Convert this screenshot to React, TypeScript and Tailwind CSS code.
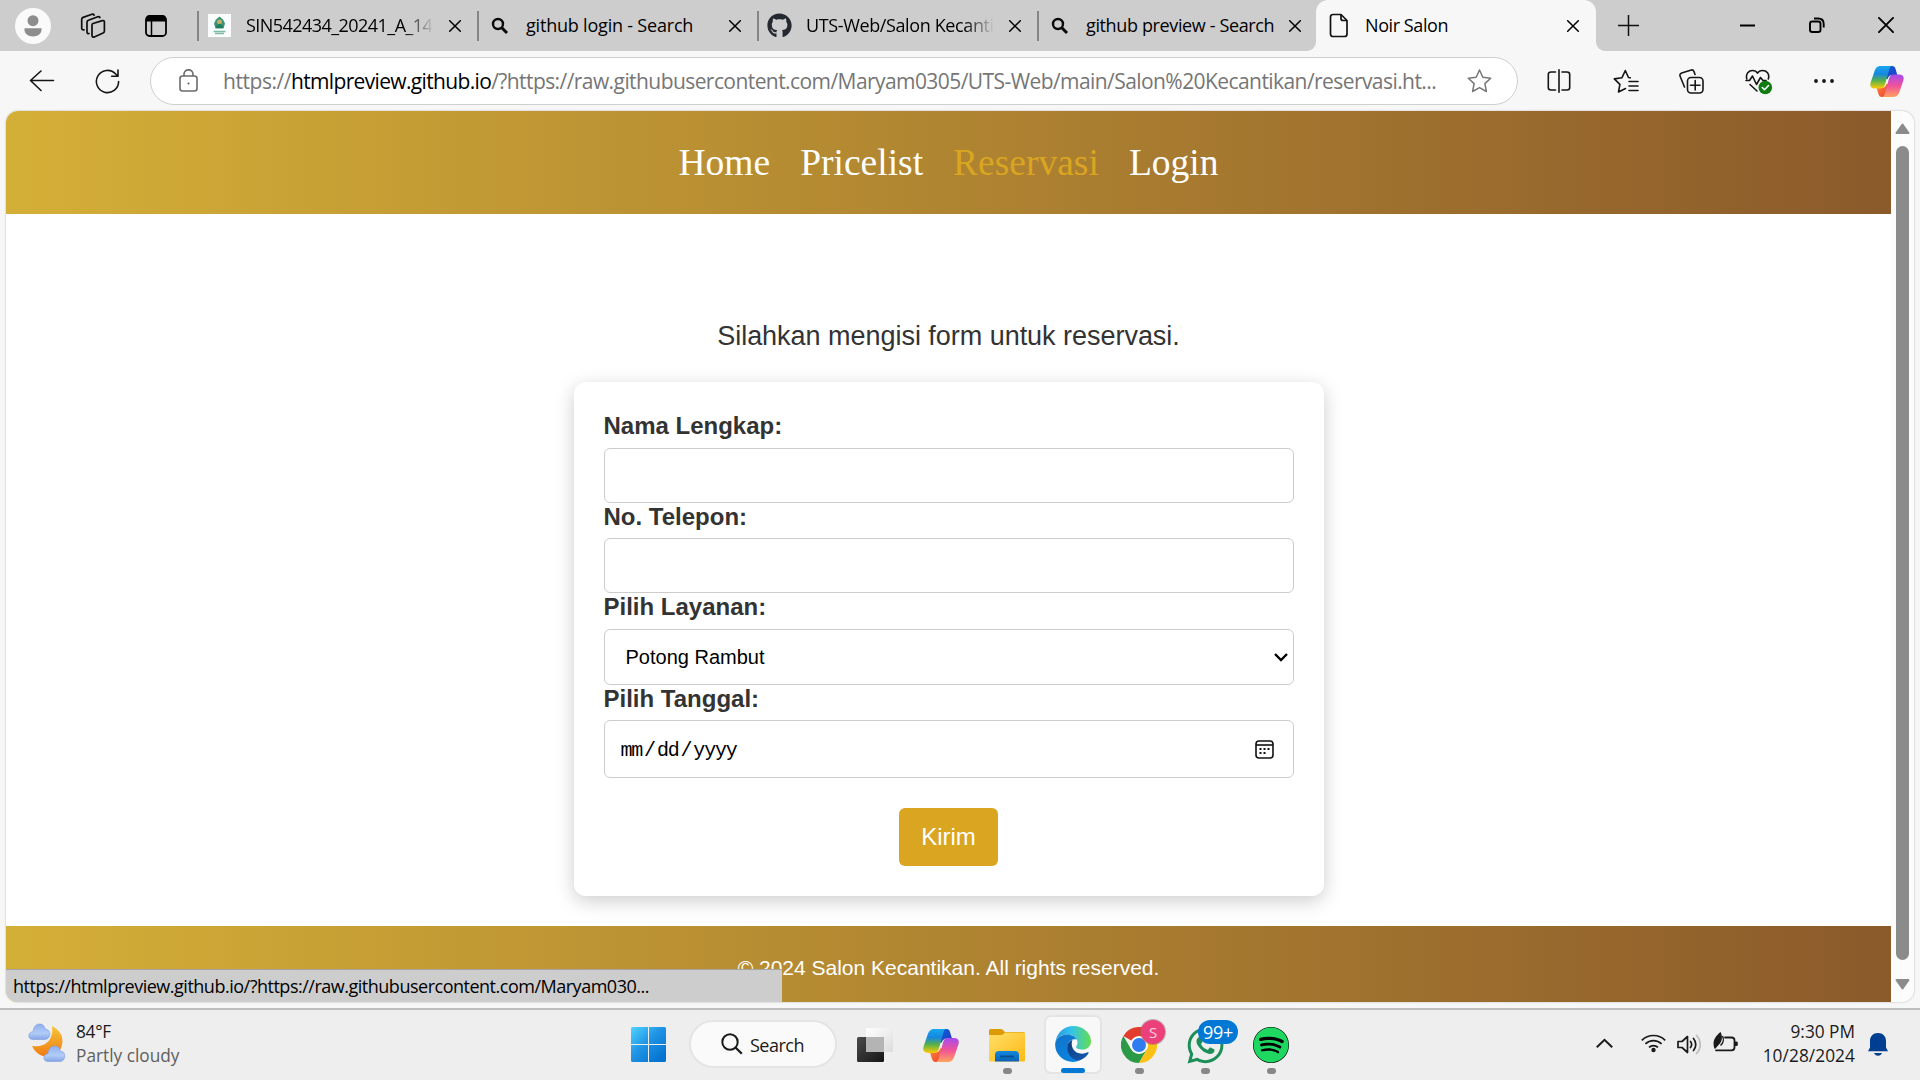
import React from "react";
import type { ReactNode } from "react";
import { FaGithub, FaSpotify, FaWhatsapp } from "react-icons/fa";

const UI = "font-['Open_Sans','Noto_Sans',sans-serif]";

function CloseX({ size = 12, width = 1.5 }: { size?: number; width?: number }) {
  return (
    <svg width={size} height={size} viewBox="0 0 12 12" fill="none" stroke="#000" strokeWidth={width} strokeLinecap="round">
      <path d="M.7.7 11.3 11.3M11.3.7.7 11.3" />
    </svg>
  );
}

function BoldSearch() {
  return (
    <svg width="18" height="18" viewBox="0 0 18 18" fill="none" stroke="#0a0a0a">
      <circle cx="7" cy="7" r="5" strokeWidth="2.4" />
      <path d="M10.8 10.8 16 16" strokeWidth="3" />
    </svg>
  );
}

function Copilot({ width, height, id }: { width: number; height: number; id: string }) {
  return (
    <svg width={width} height={height} viewBox="0 0 36 33">
      <defs>
        <linearGradient id={id + "a"} x1="0" y1="0" x2="0" y2="1">
          <stop offset="0" stopColor="#18a7ee" />
          <stop offset=".35" stopColor="#1687e0" />
          <stop offset=".65" stopColor="#58b148" />
          <stop offset="1" stopColor="#ffcb05" />
        </linearGradient>
        <linearGradient id={id + "b"} x1="0" y1="0" x2="0" y2="1">
          <stop offset="0" stopColor="#a54bef" />
          <stop offset=".5" stopColor="#f0529a" />
          <stop offset="1" stopColor="#ffa35e" />
        </linearGradient>
        <linearGradient id={id + "c"} x1="0" y1="0" x2="1" y2="1">
          <stop offset="0" stopColor="#0f5fd8" />
          <stop offset="1" stopColor="#1f3fc4" />
        </linearGradient>
        <linearGradient id={id + "d"} x1="0" y1="0" x2="1" y2="1">
          <stop offset="0" stopColor="#ff8a3c" />
          <stop offset="1" stopColor="#e8392f" />
        </linearGradient>
      </defs>
      <path d="M20 0h3.500c2 0 3 1.200 3.600 3.200L29 9.500h-5c-3 0-4.600 1.500-5.500 4.500L14 12Z" fill={`url(#${id}c)`} />
      <path d="M16 33h-3.500c-2 0-3-1.200-3.600-3.200L7 23.500h5c3 0 4.600-1.500 5.500-4.500L22 21Z" fill={`url(#${id}d)`} />
      <path d="M23 0H11C7.500 0 5.600 2.600 4.500 6L.6 17.500C-.7 21.600 1.200 24 5 24h6c2.600 0 4-1.500 4.800-4L20.300 4c.6-2.300 1.200-3.700 2.700-4Z" fill={`url(#${id}a)`} />
      <path d="M13 33h12c3.500 0 5.400-2.600 6.500-6l3.900-11.500C36.700 11.400 34.800 9 31 9h-6c-2.600 0-4 1.500-4.800 4l-4.500 16c-.6 2.300-1.200 3.700-2.700 4Z" fill={`url(#${id}b)`} />
    </svg>
  );
}

function Tab({ icon, title, ls, fade }: { icon: ReactNode; title: string; ls: string; fade?: boolean }) {
  return (
    <div className="flex h-[51px] items-center">
      <div className="h-[30px] w-[2px] bg-[#858585]" />
      <div className="flex w-[41px] justify-center">{icon}</div>
      <div className={"w-[196px] pl-[6px] text-[18px] whitespace-nowrap text-black " + ls + (fade ? " [mask-image:linear-gradient(to_right,#000_84%,transparent_99%)]" : "")}>
        {title}
      </div>
      <div className="flex w-[41px] justify-center pr-[4px]">
        <CloseX />
      </div>
    </div>
  );
}

function TabStrip() {
  return (
    <div className="flex h-[51px] shrink-0 bg-[#cdcdcd]">
      <div className="flex h-[51px] w-[197px] items-center">
        <div className="ml-[15px] flex h-9 w-9 items-center justify-center rounded-full bg-[#fafafa]">
          <svg width="18" height="22" viewBox="0 0 18 22" fill="#8d8d8d">
            <circle cx="9" cy="5.700" r="5.500" />
            <path d="M.5 13.200h17c.6 5-3 8.300-8.500 8.300S-.1 18.200.5 13.200Z" />
          </svg>
        </div>
        <svg className="ml-[29px]" width="26" height="26" viewBox="0 0 26 26" fill="none" stroke="#0d0d0d" strokeWidth="1.700" strokeLinejoin="round" strokeLinecap="round">
          <path d="M13 10.500 22.400 7.600c1.100-.3 2 .3 2 1.400v9c0 1-.4 1.600-1.300 2l-8.800 4c-1.200.5-2.300-.2-2.300-1.400V12c0-.8.300-1.300 1-1.500Z" />
          <path d="M9 20.500c-1.300.2-2-.4-2-1.600V9.200c0-1 .5-1.600 1.400-2l9.400-3.500c.9-.3 1.700 0 2.100.8" />
          <path d="M4 16.800c-1.300.2-2.300-.4-2.300-1.600V6.400c0-1 .5-1.600 1.400-2L12 1.300c.9-.3 1.700 0 2.100.8" />
        </svg>
        <svg className="ml-[39px]" width="22" height="22" viewBox="0 0 22 22">
          <rect x="1" y="1" width="20" height="20" rx="3.500" fill="none" stroke="#000" strokeWidth="1.800" />
          <path d="M1 6.500V4.500C1 2.500 2.500 1 4.500 1h13C19.500 1 21 2.500 21 4.500v2Z" fill="#000" />
          <path d="M6.500 6v15" stroke="#000" strokeWidth="1.500" />
        </svg>
      </div>
      <Tab
        title="SIN542434_20241_A_14"
        ls="tracking-[-0.55px]"
        fade
        icon={
          <svg width="23" height="23" viewBox="0 0 23 23">
            <rect width="23" height="23" fill="#fbfdfc" />
            <path d="M11.500 2.500 15 5.500l2 4-1.500 5h-8L6 9.500l2-4Z" fill="#3a9373" />
            <circle cx="11.500" cy="8" r="2.400" fill="#c9b06a" />
            <path d="M8 12.500 11.500 9.500 15 12.500v1.500H8Z" fill="#1e7d5c" />
            <path d="M5.500 17.500h12M7 19.500h9" stroke="#7dbba4" strokeWidth="1.400" />
          </svg>
        }
      />
      <Tab title="github login - Search" ls="tracking-[-0.2px]" icon={<BoldSearch />} />
      <Tab title="UTS-Web/Salon Kecanti" ls="tracking-[-0.38px]" fade icon={<FaGithub size={25} color="#24292f" />} />
      <Tab title="github preview - Search" ls="tracking-[-0.37px]" icon={<BoldSearch />} />
      <div className="-ml-[10px] flex h-[51px] w-[298px]">
        <div className="h-[51px] w-[9px] bg-[#f7f7f7]">
          <div className="h-full w-full rounded-br-[9px] bg-[#cdcdcd]" />
        </div>
        <div className="bg-[#cdcdcd]">
          <div className="flex h-[51px] w-[280px] items-center rounded-t-[12px] bg-[#f7f7f7]">
            <svg className="ml-[13px]" width="20" height="25" viewBox="0 0 20 25" fill="none" stroke="#111" strokeWidth="1.700" strokeLinejoin="round">
              <path d="M4 1.500h8l6 6V21c0 1.500-1 2.500-2.500 2.500H4C2.500 23.500 1.500 22.500 1.500 21V4C1.500 2.500 2.500 1.500 4 1.500Z" />
              <path d="M12 1.500V5.500c0 1.300.7 2 2 2h4" />
            </svg>
            <div className="ml-[16px] w-[202px] text-[18px] tracking-[-0.42px]">Noir Salon</div>
            <CloseX />
          </div>
        </div>
        <div className="h-[51px] w-[9px] bg-[#f7f7f7]">
          <div className="h-full w-full rounded-bl-[9px] bg-[#cdcdcd]" />
        </div>
      </div>
      <div className="flex h-[50px] flex-1 items-center">
        <svg className="ml-[13px]" width="21" height="21" viewBox="0 0 21 21" stroke="#111" strokeWidth="1.500">
          <path d="M10.500 0v21M0 10.500h21" />
        </svg>
        <svg className="ml-[101px]" width="15" height="15" viewBox="0 0 15 15" stroke="#000" strokeWidth="2">
          <path d="M0 7.500h15" />
        </svg>
        <svg className="ml-[54px]" width="16" height="16" viewBox="0 0 16 16" fill="none" stroke="#000" strokeWidth="1.900">
          <rect x="1" y="4.500" width="10.500" height="10.500" rx="2.300" />
          <path d="M5 1.500h4c3.500 0 5.700 2 5.700 5.500v3.500" />
        </svg>
        <div className="ml-[53px]">
          <CloseX size={16} width={1.4} />
        </div>
      </div>
    </div>
  );
}

function AddressBar() {
  const line = { fill: "none", stroke: "#161616", strokeWidth: 1.6, strokeLinecap: "round" as const, strokeLinejoin: "round" as const };
  return (
    <div className="flex h-[60px] shrink-0 items-center bg-[#f7f7f7]">
      <svg className="ml-[29px]" width="26" height="22" viewBox="0 0 26 22" {...line}>
        <path d="M24.500 10.500H1.500M12 1 1.500 10.500 12 20.500" />
      </svg>
      <svg className="ml-[40px]" width="25" height="25" viewBox="0 0 25 25" {...line}>
        <path d="M23.600 12.500A11.100 11.100 0 1 1 20.700 5L23 7.200M23 1v6.300h-6.300" />
      </svg>
      <div className="ml-[30px] flex h-[48px] w-[1368px] items-center rounded-full border border-[#cfcfcf] bg-white">
        <svg className="-mt-[2px] ml-[28px]" width="19" height="23" viewBox="0 0 19 23" fill="none" stroke="#6b6b6b" strokeWidth="1.600">
          <rect x="1" y="7" width="17" height="15" rx="2.500" />
          <path d="M5 7V5.200C5 2.700 6.900.9 9.500.9S14 2.700 14 5.200V7" />
          <circle cx="9.500" cy="14.500" r="1" fill="#555" stroke="none" />
        </svg>
        <div className="mt-[2px] ml-[25px] flex w-[1238px] text-[21px] whitespace-nowrap text-[#767676]">
          <span className="tracking-[-0.45px]">https://</span>
          <span className="tracking-[-0.66px] text-black">htmlpreview.github.io</span>
          <span className="tracking-[-0.572px]">/?https://raw.githubusercontent.com/Maryam0305/UTS-Web/main/Salon%20Kecantikan/reservasi.ht...</span>
        </div>
        <svg className="ml-[6px]" width="25" height="24" viewBox="0 0 25 24" fill="none" stroke="#777" strokeWidth="1.500" strokeLinejoin="round">
          <path d="m12.500 1 3.300 7.200 7.900 1-5.800 5.400 1.500 7.900-6.900-3.900-6.900 3.900 1.500-7.900L1.300 9.200l7.900-1Z" />
        </svg>
      </div>
      <svg className="ml-[29px]" width="24" height="24" viewBox="0 0 24 24" {...line}>
        <path d="M8.500 3H4C2.300 3 1.300 4 1.300 5.500v13C1.300 20 2.300 21 4 21h4.500M15 3h5c1.700 0 2.700 1 2.700 2.500v13c0 1.500-1 2.500-2.700 2.500h-5M12 .8v22.400" />
      </svg>
      <svg className="ml-[42px]" width="26" height="25" viewBox="0 0 26 25" {...line}>
        <path d="m5.500 23 1.400-7.600L1.300 9.900 8.900 8.800 12.300 1.500 15.500 8.500M5.500 23l7-3.500M16 12.500h9M16 17h9M16 21.500h9M15.500 8.500l1.800.3" />
      </svg>
      <svg className="ml-[40px]" width="25" height="25" viewBox="0 0 25 25" {...line}>
        <rect x="8.500" y="8.500" width="15.500" height="15.500" rx="3.500" />
        <path d="M16.200 11.500v9.500M11.500 16.200h9.500M5.500 18 1.200 7.500c-.7-1.700 0-3 1.500-3.600L11.500 1.200c1.500-.6 3 .1 3.600 1.600l.9 2.700" />
      </svg>
      <svg className="mt-[2px] ml-[41px]" width="28" height="27" viewBox="0 0 28 27" {...line}>
        <path d="M1.800 10C.3 4.500 4 1.500 7.500 1.500c2.300 0 4 1 5 2.700 1-1.700 2.700-2.700 5-2.700C21.500 1.500 25 4.500 23.300 10" />
        <path d="M1 11.500h3.500L7.500 7l4 8.500 4-7 2.500 3h3M5 15.500l7 6.500" />
        <circle cx="20.300" cy="18.500" r="6.800" fill="#0f7b10" stroke="none" />
        <path d="m17.300 18.500 2.200 2.200 4-4.200" stroke="#fff" />
      </svg>
      <svg className="ml-[41px]" width="20" height="4" viewBox="0 0 20 4" fill="#161616">
        <circle cx="2" cy="2" r="1.900" />
        <circle cx="10" cy="2" r="1.900" />
        <circle cx="18" cy="2" r="1.900" />
      </svg>
      <div className="ml-[36px]">
        <Copilot width={34} height={31} id="top" />
      </div>
    </div>
  );
}

function Field({ label, className, children }: { label: string; className: string; children?: ReactNode }) {
  return (
    <>
      <label className="block h-[28px] text-[24px] leading-[28px] font-bold text-[#333]">{label}</label>
      <div className={"flex items-center rounded-[6px] border border-[#ccc] bg-white text-[20px] text-black " + className}>{children}</div>
    </>
  );
}

function SalonPage() {
  return (
    <div className="relative ml-[6px] flex h-[891px] w-[1908px] shrink-0 overflow-hidden rounded-[12px] bg-[#fcfcfc] shadow-[0_0_2px_rgba(0,0,0,0.3)]">
      <div className="flex w-[1885px] flex-col bg-white font-['Liberation_Sans',Arial,sans-serif]">
        <nav className="flex h-[103px] shrink-0 items-center justify-center gap-[30px] bg-[linear-gradient(to_right,#d4af37,#8b5a2b)] pt-[2px] font-['Liberation_Serif',serif] text-[37.5px] text-white">
          <a>Home</a>
          <a>Pricelist</a>
          <a className="text-[#daa520]">Reservasi</a>
          <a>Login</a>
        </nav>
        <p className="mt-[106px] h-[32px] text-center text-[27px] leading-[32px] tracking-[-0.03px] text-[#333]">
          Silahkan mengisi form untuk reservasi.
        </p>
        <form className="mx-auto mt-[30px] flex h-[514px] w-[750px] shrink-0 flex-col rounded-[12px] bg-white px-[30px] pt-[30px] shadow-[0_5px_19px_rgba(0,0,0,0.2)]">
          <Field label="Nama Lengkap:" className="mt-[8px] h-[55px]" />
          <Field label="No. Telepon:" className="mt-[7px] h-[55px]" />
          <Field label="Pilih Layanan:" className="mt-[8px] h-[56px] justify-between pr-[5px] pl-[21px]">
            <span>Potong Rambut</span>
            <svg width="14" height="9" viewBox="0 0 14 9" fill="none" stroke="#000" strokeWidth="2.400">
              <path d="m1 1 6 6 6-6" />
            </svg>
          </Field>
          <Field label="Pilih Tanggal:" className="mt-[7px] h-[58px] justify-between pr-[19px] pl-[16px]">
            <span className="flex gap-[2px] pt-[3px] font-['Liberation_Mono',monospace] text-[20px] tracking-[-1.200px]">
              <span>mm</span>
              <span>/</span>
              <span>dd</span>
              <span>/</span>
              <span>yyyy</span>
            </span>
            <svg width="19" height="19" viewBox="0 0 19 19" fill="none" stroke="#111" strokeWidth="1.600">
              <rect x="1" y="1" width="17" height="17" rx="3" />
              <path d="M1 5h17" />
              <path d="M4.500 9h2M8.500 9h2M12.500 9h2M4.500 13h2M8.500 13h2" strokeWidth="2" />
            </svg>
          </Field>
          <button type="button" className="mx-auto mt-[30px] h-[58px] w-[99px] rounded-[6px] bg-[#daa520] text-[24px] text-white">
            Kirim
          </button>
        </form>
        <footer className="mt-[30px] flex h-[76px] shrink-0 items-center justify-center bg-[linear-gradient(to_right,#d4af37,#8b5a2b)] pt-[7px] text-[21px] text-white">
          © 2024 Salon Kecantikan. All rights reserved.
        </footer>
      </div>
      <div className="flex w-[23px] flex-col items-center">
        <svg className="mt-[12px] shrink-0" width="15" height="12" viewBox="0 0 15 12">
          <path d="M7.500 1.500 13.500 10h-12Z" fill="#8b8b8b" stroke="#8b8b8b" strokeWidth="2" strokeLinejoin="round" />
        </svg>
        <div className="mt-[11px] h-[814px] w-[13px] rounded-full bg-[#8b8b8b]" />
        <svg className="mt-[18px] shrink-0" width="15" height="12" viewBox="0 0 15 12">
          <path d="M7.500 10.500 13.500 2h-12Z" fill="#8b8b8b" stroke="#8b8b8b" strokeWidth="2" strokeLinejoin="round" />
        </svg>
      </div>
      <div className="absolute bottom-0 left-0 flex h-[33px] w-[776px] items-center border-t border-black/20 bg-[#cdcdcd] pl-[7px] font-['Open_Sans','Noto_Sans',sans-serif] text-[18px] tracking-[-0.49px] whitespace-nowrap text-black">
        https://htmlpreview.github.io/?https://raw.githubusercontent.com/Maryam030...
      </div>
    </div>
  );
}

function TaskItem({ children, dot }: { children: ReactNode; dot?: boolean }) {
  return (
    <div className="flex h-[68px] w-[66px] flex-col items-center">
      <div className="mt-[17px] flex h-9 items-center">{children}</div>
      {dot && <div className="mt-[5px] h-[6px] w-[9px] rounded-full bg-[#878787]" />}
    </div>
  );
}

function Taskbar() {
  return (
    <div className="mt-auto flex h-[72px] shrink-0 border-t-2 border-[#bdbdbd] bg-[#eee]">
      <div className="flex w-[631px]">
        <svg className="mt-[13px] ml-[28px]" width="38" height="42" viewBox="0 0 38 42">
          <defs>
            <linearGradient id="moon" x1="0" y1="0" x2="0" y2="1">
              <stop offset="0" stopColor="#f6c53a" />
              <stop offset="1" stopColor="#ef7b12" />
            </linearGradient>
            <linearGradient id="cloud" x1="0" y1="0" x2="0" y2="1">
              <stop offset="0" stopColor="#8fb0ee" />
              <stop offset=".6" stopColor="#b0ccf7" />
              <stop offset="1" stopColor="#86a4e6" />
            </linearGradient>
          </defs>
          <path d="M24 3c8 4 12 11 10 19-2 9-11 14-19 11-6-2-9-6-11-10 12 2 22-5 20-20Z" fill="url(#moon)" />
          <path id="wcloud" d="M5 16.500C2.500 16.500.8 15 .8 12.800S2.500 8.800 5 8.700C5.500 4 8 1 11.500 1s5 2 5.700 5c2.900.2 4.600 2.300 4.600 5s-1.800 5.500-5 5.500Z" fill="url(#cloud)" stroke="#7d9be0" strokeWidth=".6" />
          <use href="#wcloud" x="15" y="22" />
        </svg>
        <div className="mt-[10px] ml-[10px] text-[17.25px] leading-[24px]">
          <div className="tracking-[-0.3px] text-[#1a1a1a]">84°F</div>
          <div className="text-[#5f5f5f]">Partly cloudy</div>
        </div>
      </div>
      <svg className="mt-[17px]" width="35" height="35" viewBox="0 0 35 35">
        <defs>
          <linearGradient id="win" gradientUnits="userSpaceOnUse" x1="0" y1="0" x2="30" y2="32">
            <stop offset="0" stopColor="#4fd3ff" />
            <stop offset=".5" stopColor="#2094e4" />
            <stop offset="1" stopColor="#0573d1" />
          </linearGradient>
        </defs>
        <path d="M1.500 0H17v17H0V1.500Q0 0 1.500 0ZM18 0h15.500Q35 0 35 1.500V17H18ZM0 18h17v17H1.500Q0 35 0 33.500ZM18 18h17v15.500q0 1.500-1.500 1.500H18Z" fill="url(#win)" />
      </svg>
      <div className="mt-[10px] ml-[23px] flex h-[48px] w-[148px] items-center rounded-full border-2 border-[#e4e4e4] bg-[#fafafa]">
        <svg className="ml-[30px]" width="22" height="22" viewBox="0 0 22 22" fill="none" stroke="#1a1a1a" strokeWidth="2">
          <circle cx="9" cy="9" r="7.700" />
          <path d="m14.500 14.500 6.300 6.300" strokeWidth="2.300" />
        </svg>
        <div className="mt-[2px] ml-[7px] text-[18px] tracking-[-0.5px] text-[#1a1a1a]">Search</div>
      </div>
      <div className="ml-[5px] flex">
        <TaskItem>
          <svg width="36" height="34" viewBox="0 0 36 34">
            <defs>
              <linearGradient id="tva" x1="0" y1="0" x2="1" y2="1">
                <stop offset="0" stopColor="#4b4b4b" />
                <stop offset="1" stopColor="#151515" />
              </linearGradient>
              <linearGradient id="tvb" x1="0" y1="0" x2="1" y2="1">
                <stop offset="0" stopColor="#fff" />
                <stop offset="1" stopColor="#dcdcdc" />
              </linearGradient>
            </defs>
            <rect x="9" y="0" width="27" height="24" rx="1.500" fill="url(#tvb)" />
            <rect x="0" y="9" width="27" height="25" rx="1.500" fill="url(#tva)" />
            <path d="M9 9h18v15H9Z" fill="#b4b4b4" />
          </svg>
        </TaskItem>
        <TaskItem>
          <Copilot width={36} height={33} id="task" />
        </TaskItem>
        <TaskItem dot>
          <svg width="36" height="34" viewBox="0 0 36 34">
            <defs>
              <linearGradient id="fold" x1="0" y1="0" x2="1" y2="1">
                <stop offset="0" stopColor="#ffdf6b" />
                <stop offset="1" stopColor="#fdb913" />
              </linearGradient>
              <linearGradient id="foldb" x1="0" y1="0" x2="0" y2="1">
                <stop offset="0" stopColor="#1588dd" />
                <stop offset="1" stopColor="#0b62b4" />
              </linearGradient>
            </defs>
            <path d="M0 2.500Q0 1 1.500 1H12q1 0 1.700.7L16 4h18q2 0 2 2v2H0Z" fill="#dc9a06" />
            <path d="M0 7h13l3-2.500h18.500q1.500 0 1.500 1.500v26q0 1.500-1.500 1.500h-33Q0 33.500 0 32Z" fill="url(#fold)" />
            <path d="M6 33.500V27q0-4 4-4h16q4 0 4 4v6.500Z" fill="url(#foldb)" />
            <path d="M11 28.500h14" stroke="#074f96" strokeWidth="1.800" />
          </svg>
        </TaskItem>
        <div className="mt-[5px] mr-[4px] ml-[4px] flex h-[59px] w-[58px] flex-col items-center rounded-[7px] border-2 border-[#e4e4e4] bg-[#f8f8f8]">
          <svg className="mt-[9px] shrink-0" width="36" height="36" viewBox="0 0 36 36">
            <defs>
              <linearGradient id="ed1" x1="0" y1=".3" x2="1" y2=".3">
                <stop offset="0" stopColor="#2797e0" />
                <stop offset=".45" stopColor="#33c3ea" />
                <stop offset="1" stopColor="#64dd50" />
              </linearGradient>
              <linearGradient id="ed2" x1="0" y1="0" x2=".6" y2="1">
                <stop offset="0" stopColor="#1272c8" />
                <stop offset="1" stopColor="#0a84e0" />
              </linearGradient>
              <linearGradient id="ed3" x1="0" y1="0" x2="1" y2="1">
                <stop offset="0" stopColor="#0d3a7a" />
                <stop offset="1" stopColor="#165db5" />
              </linearGradient>
            </defs>
            <path d="M.3 17C1.200 7 9 0 18.300 0 28.600 0 36 7.500 36 15.200c0 5-3.600 8.300-8.400 8.300-4.300 0-6.900-1.500-6.500-2.800.4-1 1.400-1.800 1.400-4.200C22.500 12 18 8.500 12 8.500 6 8.500 1.500 12 .3 17Z" fill="url(#ed1)" />
            <path d="M.2 17.500C1.300 12 6 8.500 12 8.500c5 0 8.500 2.300 10 5.300-2-1.200-8.300-.3-9.300 6.200C11.500 28 18 33 25 33.800 22.800 35.200 20.500 36 18 36 7.500 36-.6 27.500.2 17.500Z" fill="url(#ed2)" />
            <path d="M17.500 13.800C14 15.500 12 18.500 12.200 22.500 12.500 29 18 34.500 24.500 34.500 29 33 32 30 33.600 27c.3-.6-.3-1-.9-.7-5.500 2.700-12.200 1.200-14.800-3.600-1.600-3.200-1.500-6.500-.4-8.900Z" fill="url(#ed3)" />
          </svg>
          <div className="mt-[6px] h-[5px] w-[24px] shrink-0 rounded-full bg-[#0078d4]" />
        </div>
        <TaskItem dot>
          <div className="relative h-9 w-9">
            <svg width="36" height="36" viewBox="0 0 36 36">
              <path d="M18 18 2.400 9A18 18 0 0 1 33.600 9Z" fill="#e33b2e" />
              <path d="M2.400 9 10.200 22.500 18 18l7.800 4.500L18 36A18 18 0 0 1 2.400 9Z" fill="#2a9a46" />
              <path d="M18 9h15.600A18 18 0 0 1 18 36l7.800-13.500Z" fill="#fcc117" />
              <circle cx="18" cy="18" r="9" fill="#fff" />
              <circle cx="18" cy="18" r="7" fill="#2f7cf0" />
            </svg>
            <div className="absolute -top-[7px] left-[20px] flex h-[24px] w-[24px] items-center justify-center rounded-full bg-[#ec407a] text-[15px] text-[#fbd3e0] ring-1 ring-[#8e6a6a]/50">S</div>
          </div>
        </TaskItem>
        <TaskItem dot>
          <div className="relative h-9 w-9">
            <FaWhatsapp size={41} color="#1c8f58" className="-mt-[2px] -ml-[2px] max-w-none" />
            <div className="absolute -top-[7px] left-[11px] flex h-[24px] w-[40px] items-center justify-center rounded-full bg-[#0078d4] text-[18px] tracking-[-0.3px] text-white">99+</div>
          </div>
        </TaskItem>
        <TaskItem dot>
          <div className="rounded-full bg-black">
            <FaSpotify size={36} color="#1ed760" />
          </div>
        </TaskItem>
      </div>
      <div className="ml-auto flex text-[#1a1a1a]">
        <svg className="mt-[28px]" width="17" height="11" viewBox="0 0 17 11" fill="none" stroke="#1a1a1a" strokeWidth="2">
          <path d="m.8 9.300 7.700-7.500 7.700 7.500" />
        </svg>
        <svg className="mt-[24px] ml-[28px]" width="25" height="19" viewBox="0 0 25 19" fill="none" stroke="#1a1a1a" strokeWidth="1.700">
          <path d="M.8 6.300c6.500-6.400 16.900-6.400 23.400 0M4.400 9.900c4.500-4.400 11.700-4.400 16.200 0M8 13.400c2.500-2.400 6.500-2.400 9 0" />
          <circle cx="12.500" cy="16" r="2.200" fill="#1a1a1a" stroke="none" />
        </svg>
        <svg className="mt-[24px] ml-[11px]" width="25" height="21" viewBox="0 0 25 21" fill="none" stroke="#1a1a1a" strokeWidth="1.700" strokeLinejoin="round">
          <path d="M1 7.500v6h4l5.500 5V2.500L5 7.500Z" />
          <path d="M13.500 7.500c1.300 1.700 1.300 4.300 0 6M16.500 4.500c3 3.300 3 8.700 0 12" strokeLinecap="round" />
          <path d="M19.500 1.500c5 5 5 13 0 18" stroke="#bbb" strokeLinecap="round" />
        </svg>
        <svg className="mt-[22px] ml-[11px]" width="25" height="21" viewBox="0 0 25 21">
          <path d="M12 5.500h6.500c1.800 0 3 1 3 2.800v7c0 1.800-1.200 3-3 3H3" fill="none" stroke="#1a1a1a" strokeWidth="1.800" strokeLinecap="round" />
          <path d="M22 9.500h1.500q1.300 0 1.300 1.300v2q0 1.300-1.300 1.300H22Z" fill="#1a1a1a" />
          <path d="M7.500 0c2.200 4 2 9.500-1.500 12.500L2 17l-.8-1C-.8 9 2 4.500 7.500 0Z" fill="#1a1a1a" />
          <path d="M9.500 4c1.500 3 1 7-2 9.500" stroke="#1a1a1a" strokeWidth="1.500" fill="none" />
        </svg>
        <div className="mt-[10px] w-[117px] text-right text-[17.25px] leading-[24px]">
          <div>9:30 PM</div>
          <div className="tracking-[0.08px]">10/28/2024</div>
        </div>
        <svg className="mt-[23px] mr-[32px] ml-[13px]" width="20" height="24" viewBox="0 0 20 24" fill="#003e92">
          <path d="M10 0c4.800 0 8 3.300 8 8v6.500l2 3.800H0l2-3.800V8c0-4.700 3.200-8 8-8Z" />
          <path d="M6 20h8c-.6 1.600-2 2.700-4 2.700S6.600 21.600 6 20Z" />
        </svg>
      </div>
    </div>
  );
}

export default function App() {
  return (
    <div className={"flex h-[1080px] w-[1920px] flex-col overflow-hidden bg-[#f7f7f7] " + UI}>
      <TabStrip />
      <AddressBar />
      <SalonPage />
      <Taskbar />
    </div>
  );
}
